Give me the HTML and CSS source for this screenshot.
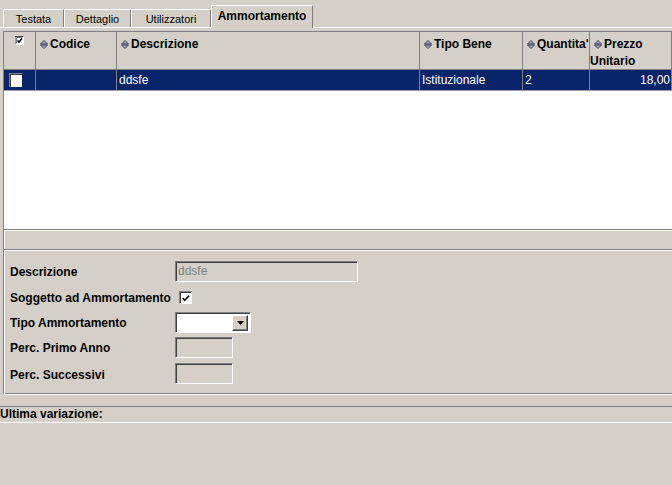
FILE: index.html
```html
<!DOCTYPE html>
<html>
<head>
<meta charset="utf-8">
<link rel="stylesheet" href="styles.css">
</head>
<body>
<div class="tabbar">
  <div class="tab t1">Testata</div>
  <div class="tab t2">Dettaglio</div>
  <div class="tab t3">Utilizzatori</div>
  <div class="tab t4 active">Ammortamento</div>
</div>

<div class="table">
  <div class="thead">
    <div class="th th-check">
      <svg class="hcheck" width="9" height="9" viewBox="0 0 9 9">
        <rect x="0" y="0" width="9" height="9" fill="#fff"/>
        <path d="M0 8.5V0.5H8.5" fill="none" stroke="#404040" stroke-width="1"/>
        <path d="M1.5 7.5V1.5H7.5" fill="none" stroke="#808080" stroke-width="1"/>
        <path d="M2.5 4.5L4 6L7 2.5" fill="none" stroke="#000" stroke-width="1.6"/>
      </svg>
    </div>
    <div class="th"><svg class="sort" width="8" height="9" viewBox="0 0 8 9"><path d="M4 0.5L7.5 4H0.5Z M0.5 5H7.5L4 8.5Z" fill="#a4a4d8" stroke="#404050" stroke-width="1"/></svg>Codice</div>
    <div class="th"><svg class="sort" width="8" height="9" viewBox="0 0 8 9"><path d="M4 0.5L7.5 4H0.5Z M0.5 5H7.5L4 8.5Z" fill="#a4a4d8" stroke="#404050" stroke-width="1"/></svg>Descrizione</div>
    <div class="th"><svg class="sort" width="8" height="9" viewBox="0 0 8 9"><path d="M4 0.5L7.5 4H0.5Z M0.5 5H7.5L4 8.5Z" fill="#a4a4d8" stroke="#404050" stroke-width="1"/></svg>Tipo Bene</div>
    <div class="th"><svg class="sort" width="8" height="9" viewBox="0 0 8 9"><path d="M4 0.5L7.5 4H0.5Z M0.5 5H7.5L4 8.5Z" fill="#a4a4d8" stroke="#404050" stroke-width="1"/></svg>Quantita'</div>
    <div class="th"><svg class="sort" width="8" height="9" viewBox="0 0 8 9"><path d="M4 0.5L7.5 4H0.5Z M0.5 5H7.5L4 8.5Z" fill="#a4a4d8" stroke="#404050" stroke-width="1"/></svg>Prezzo<br>Unitario</div>
  </div>
  <div class="trow selected">
    <div class="td td-check"><span class="rowbox"></span></div>
    <div class="td"></div>
    <div class="td">ddsfe</div>
    <div class="td">Istituzionale</div>
    <div class="td">2</div>
    <div class="td num">18,00</div>
  </div>
</div>
<div class="hstrip"></div>

<div class="form">
  <div class="lbl">Descrizione</div>
  <div><div class="field disabled wide">ddsfe</div></div>

  <div class="lbl">Soggetto ad Ammortamento</div>
  <div>
    <span class="checkbox">
      <svg width="11" height="11" viewBox="0 0 11 11"><path d="M2 5L4.2 7.4L8.8 2.4" fill="none" stroke="#000" stroke-width="1.8"/></svg>
    </span>
  </div>

  <div class="lbl">Tipo Ammortamento</div>
  <div>
    <div class="select">
      <span class="select-val"></span>
      <span class="select-btn"><svg width="7" height="4" viewBox="0 0 7 4"><path d="M0 0H7L3.5 4Z" fill="#000"/></svg></span>
    </div>
  </div>

  <div class="lbl">Perc. Primo Anno</div>
  <div><div class="field small"></div></div>

  <div class="lbl">Perc. Successivi</div>
  <div><div class="field small"></div></div>
</div>

<div class="footer">Ultima variazione:</div>
</body>
</html>
```

FILE: styles.css
```css
html, body {
  margin: 0;
  padding: 0;
}
body {
  width: 672px;
  height: 485px;
  overflow: hidden;
  background: #d4d0c8;
  font-family: "Liberation Sans", Arial, sans-serif;
  font-size: 12px;
  color: #000;
}

/* Tabs */
.tabbar {
  display: flex;
  align-items: flex-end;
  height: 27px;
  padding-left: 3px;
  border-bottom: 1px solid #fff;
}
.tab {
  box-sizing: border-box;
  height: 18px;
  border-top: 1px solid #fff;
  border-left: 1px solid #fff;
  border-right: 1px solid #808080;
  font-size: 11px;
  display: flex;
  align-items: center;
  justify-content: center;
  background: #d4d0c8;
}
.t1 { width: 61px; }
.t2 { width: 67px; }
.t3 { width: 80px; }
.t4 { width: 102px; }
.tab.active {
  height: 23px;
  margin-bottom: -1px;
  font-size: 12px;
  font-weight: bold;
  padding-bottom: 2px;
}

/* Table */
.table {
  box-sizing: border-box;
  margin: 3px 0 0 3px;
  height: 198px;
  background: #fff;
  border-top: 1px solid #808080;
  border-left: 1px solid #808080;
}
.thead, .trow {
  display: grid;
  grid-template-columns: 32px 81px 303px 103px 67px 82px;
}
.thead {
  height: 38px;
  box-sizing: border-box;
  background: #d4d0c8;
  border-bottom: 1px solid #808080;
}
.th {
  box-sizing: border-box;
  border-right: 1px solid #808080;
  font-weight: bold;
  line-height: 17px;
  padding-top: 4px;
  white-space: nowrap;
  overflow: hidden;
}
.th-check {
  padding: 4px 0 0 11px;
  line-height: 0;
}
.sort {
  margin: 0 2px 0 4px;
  vertical-align: -1px;
}
.trow {
  height: 21px;
}
.trow.selected {
  background: #0a246a;
  color: #fff;
}
.td {
  box-sizing: border-box;
  border-right: 1px solid #808080;
  border-bottom: 1px solid #a0a0b8;
  padding: 1px 2px 0;
  line-height: 19px;
  white-space: nowrap;
  overflow: hidden;
}
.td.num {
  text-align: right;
  padding-right: 1px;
}
.td-check {
  padding: 3px 0 0 5px;
  line-height: 0;
}
.rowbox {
  display: inline-block;
  box-sizing: border-box;
  width: 13px;
  height: 14px;
  background: #fff;
  border-top: 1px solid #808080;
  border-left: 1px solid #808080;
  box-shadow: inset 1px 1px #404040;
}

/* Strip below table */
.hstrip {
  box-sizing: border-box;
  margin-left: 3px;
  height: 20px;
  border-top: 1px solid #808080;
  border-left: 1px solid #808080;
  box-shadow: inset 1px 1px #fff;
}

/* Form */
.form {
  box-sizing: border-box;
  margin-left: 3px;
  height: 146px;
  border-top: 1px solid #808080;
  border-left: 1px solid #808080;
  border-bottom: 1px solid #fff;
  box-shadow: inset 1px 1px #fff, inset 0 -1px #808080;
  padding: 8px 0 0 6px;
  display: grid;
  grid-template-columns: 165px auto;
  grid-template-rows: 26px 26px 24px 26px 27px;
  align-items: center;
}
.lbl {
  font-weight: bold;
  white-space: nowrap;
  padding-top: 2px;
}
.field {
  box-sizing: border-box;
  height: 21px;
  border: 1px solid;
  border-color: #808080 #fff #fff #808080;
  box-shadow: inset 1px 1px #404040;
  background: #d4d0c8;
  line-height: 19px;
  padding-left: 2px;
}
.field.wide { width: 183px; }
.field.small { width: 58px; }
.field.disabled { color: #808080; }
.checkbox {
  display: inline-flex;
  align-items: center;
  justify-content: center;
  box-sizing: border-box;
  width: 13px;
  height: 13px;
  margin-left: 4px;
  margin-top: 1px;
  background: #fff;
  border: 1px solid;
  border-color: #808080 #fff #fff #808080;
  box-shadow: inset 1px 1px #404040;
  vertical-align: middle;
}
.checkbox svg { margin: 1px 0 0 1px; }
.select {
  box-sizing: border-box;
  width: 76px;
  height: 21px;
  display: flex;
  border: 1px solid;
  border-color: #808080 #fff #fff #808080;
  box-shadow: inset 1px 1px #404040;
  background: #fff;
  padding: 2px 2px 1px 2px;
}
.select-val { flex: 1; }
.select-btn {
  box-sizing: border-box;
  width: 16px;
  display: flex;
  align-items: center;
  justify-content: center;
  background: #d4d0c8;
  border: 1px solid;
  border-color: #fff #404040 #404040 #fff;
  box-shadow: inset -1px -1px #808080;
}

/* Footer */
.footer {
  box-sizing: border-box;
  margin-top: 11px;
  height: 17px;
  border-top: 1px solid #808080;
  border-bottom: 1px solid #fff;
  font-weight: bold;
  line-height: 15px;
}
```
